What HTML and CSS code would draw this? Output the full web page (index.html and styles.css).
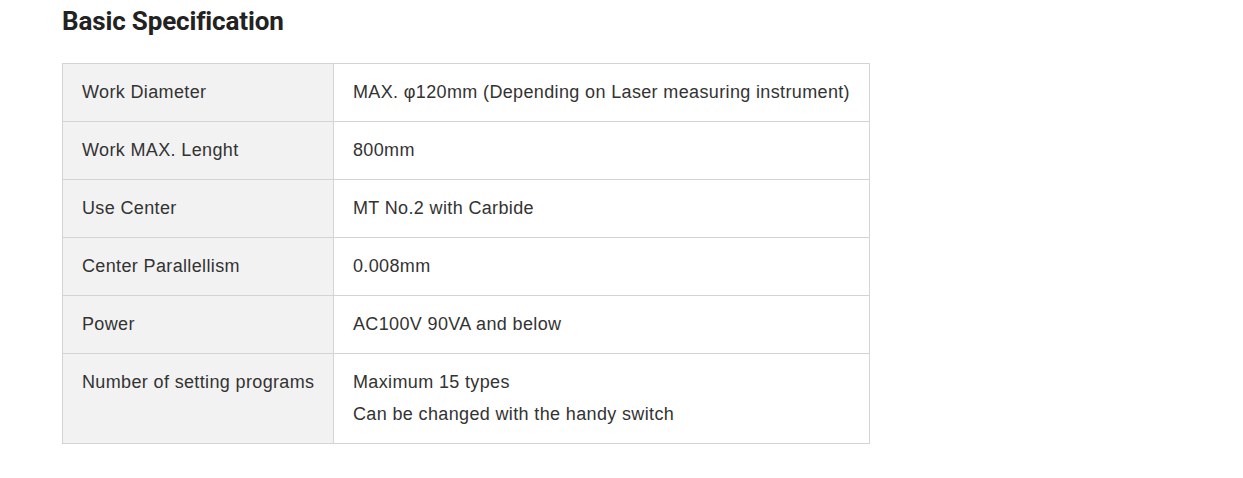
FILE: index.html
```html
<!DOCTYPE html>
<html>
<head>
<meta charset="utf-8">
<link rel="stylesheet" href="styles.css">
</head>
<body>
<div class="wrap">
  <h2 class="title">Basic Specification</h2>
  <table class="spec">
    <tr><th>Work Diameter</th><td>MAX. φ120mm (Depending on Laser measuring instrument)</td></tr>
    <tr><th>Work MAX. Lenght</th><td>800mm</td></tr>
    <tr><th>Use Center</th><td>MT No.2 with Carbide</td></tr>
    <tr><th>Center Parallellism</th><td>0.008mm</td></tr>
    <tr><th>Power</th><td>AC100V 90VA and below</td></tr>
    <tr><th>Number of setting programs</th><td>Maximum 15 types<br>Can be changed with the handy switch</td></tr>
  </table>
</div>
</body>
</html>
```
FILE: styles.css
```css
html, body {
  margin: 0;
  padding: 0;
  background: #fff;
}
.wrap {
  padding: 4px 0 0 62px;
}
.title {
  margin: 0;
  font-family: Roboto, "Liberation Sans", sans-serif;
  font-weight: 700;
  font-size: 26px;
  line-height: 34px;
  color: #222;
  letter-spacing: -0.15px;
}
.spec {
  margin-top: 25px;
  border-collapse: collapse;
  width: 808px;
  table-layout: fixed;
  font-family: "Liberation Sans", Arial, sans-serif;
  font-size: 18px;
  line-height: 32px;
  letter-spacing: 0.36px;
  color: #333;
}
.spec th, .spec td {
  border: 1px solid #d4d4d4;
  padding: 12px 10px 13px 19px;
  text-align: left;
  vertical-align: top;
  font-weight: normal;
  white-space: nowrap;
}
.spec th {
  background: #f2f2f2;
  width: 241px;
}
.spec td {
  background: #fff;
}
```
